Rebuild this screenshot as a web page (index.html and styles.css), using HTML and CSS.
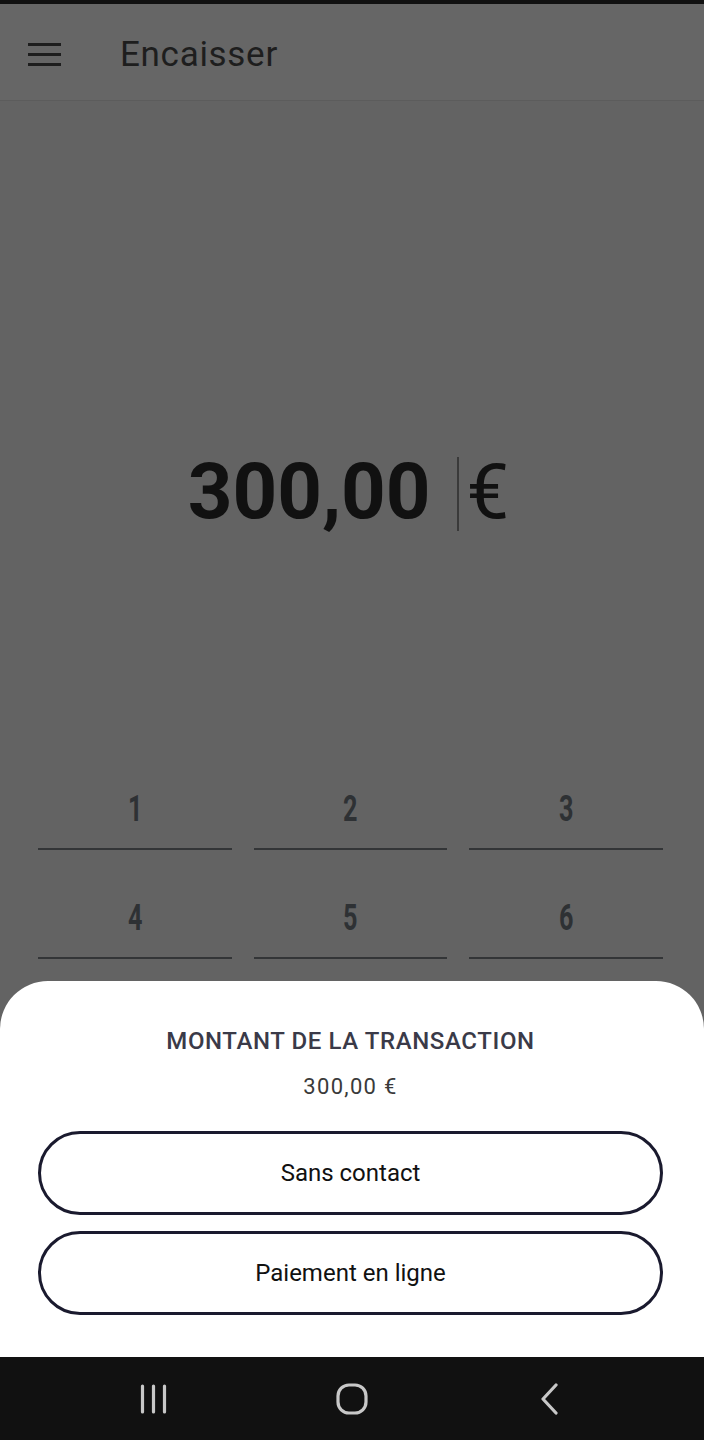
FILE: index.html
```html
<!DOCTYPE html>
<html lang="fr">
<head>
  <meta charset="UTF-8" />
  <meta name="viewport" content="width=device-width, initial-scale=1.0" />
  <title>Encaisser</title>
  <link rel="stylesheet" href="styles.css">
</head>
<body>
  <div class="screen">
    <div class="status-strip"></div>

    <header class="appbar">
      <button class="menu-btn" aria-label="Menu">
        <span></span><span></span><span></span>
      </button>
      <h1 class="title">Encaisser</h1>
    </header>

    <main class="main">
      <div class="amount">
        <span class="amount-value">300,00</span>
        <span class="caret"></span>
        <span class="amount-currency">€</span>
      </div>

      <div class="keypad">
        <div class="key"><span>1</span></div>
        <div class="key"><span>2</span></div>
        <div class="key"><span>3</span></div>
        <div class="key"><span>4</span></div>
        <div class="key"><span>5</span></div>
        <div class="key"><span>6</span></div>
      </div>
    </main>

    <section class="sheet">
      <h2 class="sheet-title">MONTANT DE LA TRANSACTION</h2>
      <p class="sheet-amount">300,00 €</p>
      <div class="sheet-actions">
        <button class="pill">Sans contact</button>
        <button class="pill">Paiement en ligne</button>
      </div>
    </section>

    <nav class="navbar">
      <svg class="nav-icon" width="28" height="30" viewBox="0 0 28 30">
        <path d="M2.5 2v26M13.5 2v26M24.5 2v26" stroke="#c8c8c8" stroke-width="3.2" stroke-linecap="round" fill="none"/>
      </svg>
      <svg class="nav-icon" width="32" height="32" viewBox="0 0 32 32">
        <rect x="2" y="2" width="28" height="28" rx="11" stroke="#c8c8c8" stroke-width="3.2" fill="none"/>
      </svg>
      <svg class="nav-icon" width="20" height="32" viewBox="0 0 20 32">
        <path d="M16 2L3 16l13 14" stroke="#c8c8c8" stroke-width="3.2" stroke-linecap="round" stroke-linejoin="round" fill="none"/>
      </svg>
    </nav>
  </div>
</body>
</html>
```

FILE: styles.css
```css
* {
  box-sizing: border-box;
}

body {
  margin: 0;
  padding: 0;
  font-family: Roboto, 'Liberation Sans', sans-serif;
  background: #111;
}

.screen {
  position: relative;
  width: 704px;
  height: 1440px;
  display: flex;
  flex-direction: column;
  background: #636363;
  overflow: hidden;
}

.status-strip {
  height: 4px;
  background: #111;
}

.appbar {
  height: 97px;
  padding-top: 4px;
  display: flex;
  align-items: center;
  background: #666;
  border-bottom: 1px solid #5c5c5c;
}

.menu-btn {
  width: 33px;
  height: 23px;
  margin-left: 28px;
  padding: 0;
  border: none;
  background: none;
  display: flex;
  flex-direction: column;
  justify-content: space-between;
}

.menu-btn span {
  display: block;
  width: 33px;
  height: 3px;
  background: #1e1e1e;
}

.title {
  margin: 0 0 0 59px;
  font-size: 35px;
  font-weight: 400;
  letter-spacing: 0.7px;
  color: #1e1e1e;
}

.main {
  flex: 1;
  padding: 0 41px 0 38px;
}

.amount {
  margin-top: 351px;
  height: 80px;
  display: flex;
  justify-content: center;
  align-items: center;
  padding-right: 4px;
  color: #111;
}

.amount-value {
  font-size: 78px;
  line-height: 80px;
  font-weight: 700;
}

.caret {
  width: 2px;
  height: 74px;
  margin-left: 26px;
  margin-top: 4px;
  background: #3a3a3a;
}

.amount-currency {
  margin-left: 8px;
  font-size: 76px;
  line-height: 80px;
  font-weight: 400;
}

.keypad {
  margin-top: 209px;
  display: grid;
  grid-template-columns: repeat(3, 1fr);
  column-gap: 22px;
}

.key {
  height: 109px;
  padding-bottom: 21px;
  display: flex;
  justify-content: center;
  align-items: flex-end;
  border-bottom: 2px solid #333537;
}

.key span {
  display: inline-block;
  font-size: 36px;
  line-height: 36px;
  font-weight: 700;
  color: #2e3134;
  transform: scaleX(0.7);
}

.sheet {
  position: absolute;
  left: 0;
  right: 0;
  bottom: 83px;
  height: 376px;
  padding: 46px 41px 0 38px;
  background: #fff;
  border-radius: 48px 48px 0 0;
  text-align: center;
}

.sheet-title {
  margin: 0;
  font-size: 24px;
  line-height: 28px;
  font-weight: 500;
  letter-spacing: 0.6px;
  color: #3a3a48;
}

.sheet-amount {
  margin: 19px 0 0;
  font-size: 22px;
  line-height: 26px;
  letter-spacing: 1.3px;
  color: #3a3a3a;
}

.sheet-actions {
  margin-top: 31px;
  display: flex;
  flex-direction: column;
  gap: 16px;
}

.pill {
  height: 84px;
  border: 3px solid #1a1a2e;
  border-radius: 42px;
  background: #fff;
  font-family: Roboto, 'Liberation Sans', sans-serif;
  font-size: 24px;
  color: #111;
}

.navbar {
  position: absolute;
  left: 0;
  right: 0;
  bottom: 0;
  height: 83px;
  background: #111;
  display: grid;
  grid-template-columns: repeat(3, 198px);
  justify-content: center;
  justify-items: center;
  align-items: center;
}

.nav-icon {
  display: block;
}
```
